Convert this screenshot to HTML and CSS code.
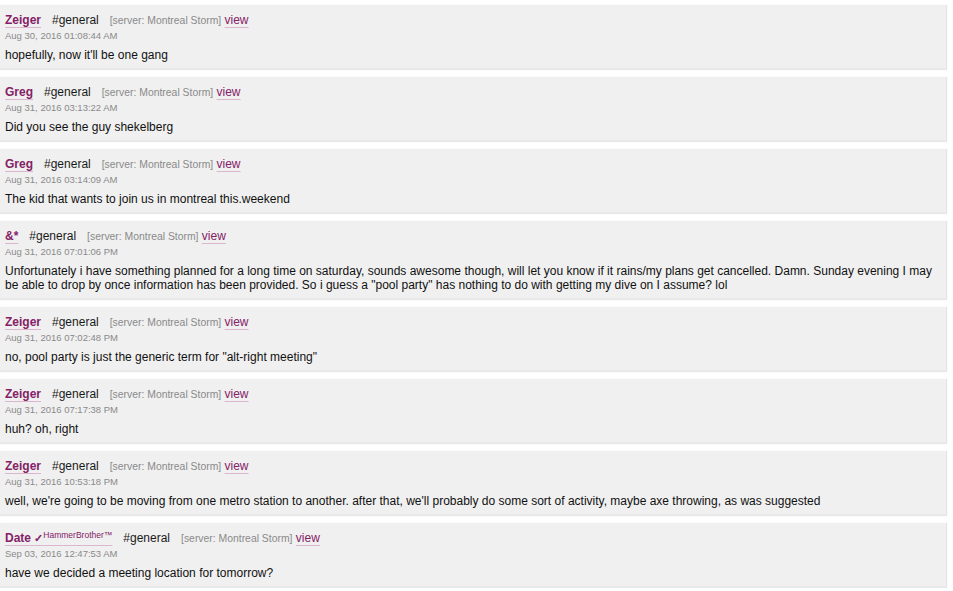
FILE: index.html
```html
<!DOCTYPE html>
<html>
<head>
<meta charset="utf-8">
<link rel="stylesheet" href="styles.css">
</head>
<body>
<div class="feed">
  <div class="msg">
    <div class="head"><a class="name">Zeiger</a><span class="chan">#general</span><span class="server">[server: Montreal Storm]</span> <a class="view">view</a></div>
    <div class="date">Aug 30, 2016 01:08:44 AM</div>
    <div class="body">hopefully, now it'll be one gang</div>
  </div>
  <div class="msg">
    <div class="head"><a class="name">Greg</a><span class="chan">#general</span><span class="server">[server: Montreal Storm]</span> <a class="view">view</a></div>
    <div class="date">Aug 31, 2016 03:13:22 AM</div>
    <div class="body">Did you see the guy shekelberg</div>
  </div>
  <div class="msg">
    <div class="head"><a class="name">Greg</a><span class="chan">#general</span><span class="server">[server: Montreal Storm]</span> <a class="view">view</a></div>
    <div class="date">Aug 31, 2016 03:14:09 AM</div>
    <div class="body">The kid that wants to join us in montreal this.weekend</div>
  </div>
  <div class="msg">
    <div class="head"><a class="name">&amp;*</a><span class="chan">#general</span><span class="server">[server: Montreal Storm]</span> <a class="view">view</a></div>
    <div class="date">Aug 31, 2016 07:01:06 PM</div>
    <div class="body">Unfortunately i have something planned for a long time on saturday, sounds awesome though, will let you know if it rains/my plans get cancelled. Damn. Sunday evening I may be able to drop by once information has been provided. So i guess a "pool party" has nothing to do with getting my dive on I assume? lol</div>
  </div>
  <div class="msg">
    <div class="head"><a class="name">Zeiger</a><span class="chan">#general</span><span class="server">[server: Montreal Storm]</span> <a class="view">view</a></div>
    <div class="date">Aug 31, 2016 07:02:48 PM</div>
    <div class="body">no, pool party is just the generic term for "alt-right meeting"</div>
  </div>
  <div class="msg">
    <div class="head"><a class="name">Zeiger</a><span class="chan">#general</span><span class="server">[server: Montreal Storm]</span> <a class="view">view</a></div>
    <div class="date">Aug 31, 2016 07:17:38 PM</div>
    <div class="body">huh? oh, right</div>
  </div>
  <div class="msg">
    <div class="head"><a class="name">Zeiger</a><span class="chan">#general</span><span class="server">[server: Montreal Storm]</span> <a class="view">view</a></div>
    <div class="date">Aug 31, 2016 10:53:18 PM</div>
    <div class="body">well, we're going to be moving from one metro station to another. after that, we'll probably do some sort of activity, maybe axe throwing, as was suggested</div>
  </div>
  <div class="msg">
    <div class="head"><a class="name">Date <span class="check">✓</span><span class="tag">HammerBrother™</span></a><span class="chan">#general</span><span class="server">[server: Montreal Storm]</span> <a class="view">view</a></div>
    <div class="date">Sep 03, 2016 12:47:53 AM</div>
    <div class="body">have we decided a meeting location for tomorrow?</div>
  </div>
</div>
</body>
</html>
```

FILE: styles.css
```css
html, body {
  margin: 0;
  padding: 0;
  background: #ffffff;
}
body {
  font-family: "Liberation Sans", Arial, sans-serif;
  color: #111111;
}
.feed {
  padding-top: 5px;
  display: flex;
  flex-direction: column;
  gap: 7px;
}
.msg {
  width: 946px;
  box-sizing: border-box;
  background: #f0f0f0;
  border-bottom: 2px solid #e9e9e9;
  box-shadow: 1px 0 1px #e4e4e4;
  padding: 8px 5px 6px 5px;
}
.head {
  font-size: 12px;
  line-height: 14px;
  height: 14px;
  white-space: nowrap;
}
.name {
  font-weight: bold;
  color: #842166;
  text-decoration: underline;
  text-decoration-color: #dcb6cf;
  text-underline-offset: 3px;
  text-decoration-thickness: 1px;
  margin-right: 11px;
}
.check {
  font-weight: bold;
  font-size: 11px;
  line-height: 1px;
}
.tag {
  font-size: 8.5px;
  font-weight: normal;
  line-height: 1px;
  vertical-align: 4px;
}
.chan {
  color: #1a1a1a;
  margin-right: 11px;
}
.server {
  font-size: 10.4px;
  color: #8a8a8a;
}
.view {
  color: #842166;
  text-decoration: underline;
  text-decoration-color: #dcb6cf;
  text-underline-offset: 3px;
}
.date {
  font-size: 9.5px;
  line-height: 12px;
  height: 12px;
  color: #8a8a8a;
  margin-top: 3px;
}
.body {
  font-size: 12px;
  line-height: 14px;
  margin-top: 6px;
  color: #111111;
}
```
